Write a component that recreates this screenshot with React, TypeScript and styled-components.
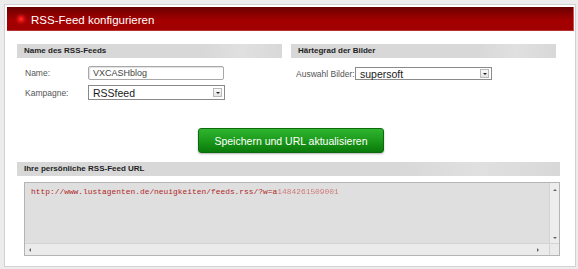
import styled, { createGlobalStyle } from "styled-components"

const GlobalStyle = createGlobalStyle`
    body {
        margin: 0;
        background: #ececec;
        font-family: "Liberation Sans", Arial, sans-serif;
    }
`

const Panel = styled.div`
    margin: 4px;
    width: 567px;
    height: 259px;
    border: 1px solid #d2d2d2;
    background: #fff;
    padding: 2px 1px 0 2px;
    box-sizing: content-box;
`

const Header = styled.div`
    height: 24px;
    box-sizing: border-box;
    display: flex;
    align-items: center;
    gap: 8px;
    padding-left: 12px;
    background: linear-gradient(#6a0000 0%, #8e0000 35%, #a40000 60%, #a00000 100%);
    border-right: 1px solid #d05050;
    border-bottom: 1px solid #b83030;
`

const Dot = styled.span`
    width: 4px;
    height: 4px;
    border-radius: 50%;
    background: #ff2020;
    box-shadow: 0 0 3px 2px rgba(255, 30, 30, 0.7);
`

const Title = styled.h1`
    margin: 0;
    padding-top: 2px;
    font-size: 11.5px;
    font-weight: 400;
    color: #fff;
`

const Body = styled.div`
    padding: 13px 14px 0 10px;
`

const Columns = styled.div`
    display: grid;
    grid-template-columns: 265px 265px;
    gap: 9px;
`

const SectionHead = styled.div`
    height: 14px;
    line-height: 14px;
    padding-left: 7px;
    font-size: 8px;
    font-weight: 700;
    color: #1e1e1e;
    background: linear-gradient(90deg, #d8d8d8 0%, #d8d8d8 70%, #e0e0e0 85%, #d8d8d8 100%);
`

const Rows = styled.div<{ top: number }>`
    display: flex;
    flex-direction: column;
    gap: 5px;
    margin-top: ${props => props.top}px;
`

const Row = styled.div<{ pad: number }>`
    display: flex;
    align-items: center;
    padding-left: ${props => props.pad}px;
`

const Label = styled.label<{ w: number }>`
    width: ${props => props.w}px;
    flex-shrink: 0;
    white-space: nowrap;
    font-size: 8.5px;
    color: #555;
`

const TextInput = styled.div`
    width: 136px;
    height: 14px;
    box-sizing: border-box;
    border: 1px solid #a8a8a8;
    border-radius: 2px;
    box-shadow: inset 1px 1px 1px rgba(0, 0, 0, 0.12);
    padding-left: 4px;
    font-size: 9px;
    line-height: 12px;
    color: #444;
    background: #fff;
`

const Select = styled.div<{ h: number }>`
    width: 137px;
    height: ${props => props.h}px;
    box-sizing: border-box;
    border: 1px solid #8a8a8a;
    display: flex;
    align-items: center;
    justify-content: space-between;
    padding: 0 2px 0 4px;
    font-size: 10.5px;
    color: #1a1a1a;
    background: #fff;
`

const Arrow = styled.span`
    width: 9px;
    height: 9px;
    box-sizing: border-box;
    border: 1px solid #b8b8b8;
    background: linear-gradient(#fafafa, #e4e4e4);
    display: flex;
    align-items: center;
    justify-content: center;
    &::after {
        content: "";
        border-left: 2px solid transparent;
        border-right: 2px solid transparent;
        border-top: 2px solid #222;
    }
`

const ButtonWrap = styled.div`
    display: flex;
    justify-content: center;
    margin: 28px 0 9px;
    padding-left: 5px;
`

const Button = styled.button`
    width: 186px;
    height: 25px;
    border: 1px solid #0b6a0b;
    border-radius: 3px;
    background: linear-gradient(#2fb52f 0%, #1c9a1c 50%, #0a7a0a 100%);
    box-shadow: 0 1px 2px rgba(0, 0, 0, 0.3);
    color: #fff;
    font-family: "Liberation Sans", Arial, sans-serif;
    font-size: 10.5px;
    padding: 0;
`

const TextBox = styled.div`
    margin: 6px 0 0 7px;
    height: 74px;
    box-sizing: border-box;
    border: 1px solid #b4b4b4;
    display: grid;
    grid-template-columns: 1fr 10px;
    grid-template-rows: 1fr 12px;
    background: #dfdfdf;
`

const Content = styled.div`
    padding: 4px 0 0 6px;
    font-family: "Liberation Mono", "Courier New", monospace;
    font-size: 7.9px;
    line-height: 10px;
    color: #b02828;
    white-space: nowrap;
    overflow: hidden;
`

const Hidden = styled.span`
    color: #d07a7a;
    filter: blur(0.7px);
`

const VBar = styled.div`
    background: #ededed;
    border-left: 1px solid #d4d4d4;
    display: flex;
    flex-direction: column;
    justify-content: space-between;
    align-items: center;
    padding: 6px 0 4px;
`

const HBar = styled.div`
    background: #ebebeb;
    border-top: 1px solid #d4d4d4;
    display: flex;
    justify-content: space-between;
    align-items: center;
    padding: 0 10px 0 4px;
`

const Corner = styled.div`
    background: #ebebeb;
    border-top: 1px solid #d4d4d4;
    border-left: 1px solid #d4d4d4;
`

const Tri = styled.span<{ dir: "up" | "down" | "left" | "right" }>`
    width: 0;
    height: 0;
    border: 2px solid transparent;
    ${props => props.dir === "up" && "border-bottom: 2px solid #666; border-top-width: 0;"}
    ${props => props.dir === "down" && "border-top: 2px solid #666; border-bottom-width: 0;"}
    ${props => props.dir === "left" && "border-right: 2px solid #666; border-left-width: 0;"}
    ${props => props.dir === "right" && "border-left: 2px solid #666; border-right-width: 0;"}
`

export default function App() {
    return (
        <>
            <GlobalStyle />
            <Panel>
                <Header>
                    <Dot />
                    <Title>RSS-Feed konfigurieren</Title>
                </Header>
                <Body>
                    <Columns>
                        <div>
                            <SectionHead>Name des RSS-Feeds</SectionHead>
                            <Rows top={8}>
                                <Row pad={8}>
                                    <Label w={63}>Name:</Label>
                                    <TextInput>VXCASHblog</TextInput>
                                </Row>
                                <Row pad={8}>
                                    <Label w={63}>Kampagne:</Label>
                                    <Select h={15}>RSSfeed<Arrow /></Select>
                                </Row>
                            </Rows>
                        </div>
                        <div>
                            <SectionHead>Härtegrad der Bilder</SectionHead>
                            <Rows top={9}>
                                <Row pad={5}>
                                    <Label w={59}>Auswahl Bilder:</Label>
                                    <Select h={13}>supersoft<Arrow /></Select>
                                </Row>
                            </Rows>
                        </div>
                    </Columns>
                    <ButtonWrap>
                        <Button>Speichern und URL aktualisieren</Button>
                    </ButtonWrap>
                    <SectionHead>Ihre persönliche RSS-Feed URL</SectionHead>
                    <TextBox>
                        <Content>
                            http://www.lustagenten.de/neuigkeiten/feeds.rss/?w=a<Hidden>1484261509001</Hidden>
                        </Content>
                        <VBar>
                            <Tri dir="up" />
                            <Tri dir="down" />
                        </VBar>
                        <HBar>
                            <Tri dir="left" />
                            <Tri dir="right" />
                        </HBar>
                        <Corner />
                    </TextBox>
                </Body>
            </Panel>
        </>
    )
}
